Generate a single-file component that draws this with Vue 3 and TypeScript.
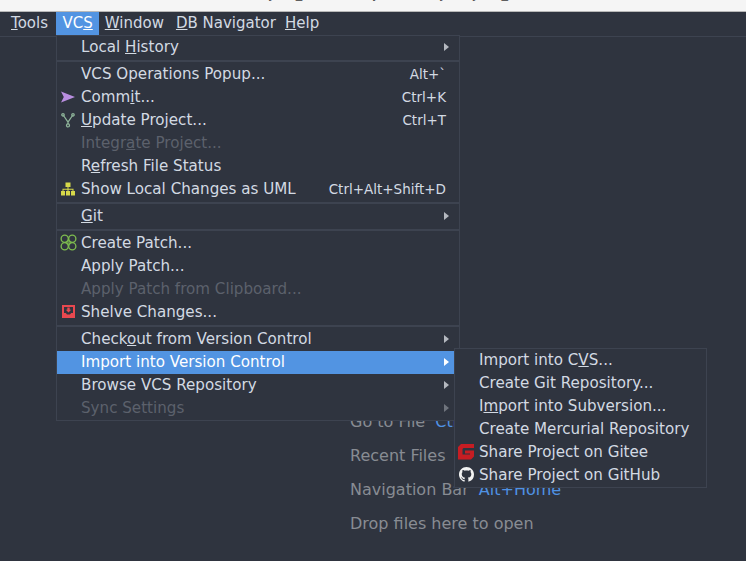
<script setup lang="ts">
interface Item {
  label?: string
  u?: number
  key?: string
  arrow?: boolean
  disabled?: boolean
  active?: boolean
  icon?: string
  sep?: boolean
}
const titleBits = [
  { ch: 'y', gap: 0 },
  { ch: '_', gap: 20 },
  { ch: 'j', gap: 71 },
  { ch: ',', gap: 10 },
  { ch: 'y', gap: 48 },
  { ch: 'y', gap: 25 },
  { ch: '_', gap: 22 },
  { ch: ',', gap: 68 },
]
const topMenus = [
  { label: 'Tools', u: 0 },
  { label: 'VCS', u: 2, active: true },
  { label: 'Window', u: 0 },
  { label: 'DB Navigator', u: 0 },
  { label: 'Help', u: 0 },
]
const items: Item[] = [
  { label: 'Local History', u: 6, arrow: true },
  { sep: true },
  { label: 'VCS Operations Popup...', key: 'Alt+`' },
  { label: 'Commit...', u: 4, key: 'Ctrl+K', icon: 'commit' },
  { label: 'Update Project...', u: 0, key: 'Ctrl+T', icon: 'update' },
  { label: 'Integrate Project...', u: 6, disabled: true },
  { label: 'Refresh File Status', u: 1 },
  { label: 'Show Local Changes as UML', key: 'Ctrl+Alt+Shift+D', icon: 'uml' },
  { sep: true },
  { label: 'Git', u: 0, arrow: true },
  { sep: true },
  { label: 'Create Patch...', icon: 'patch' },
  { label: 'Apply Patch...' },
  { label: 'Apply Patch from Clipboard...', disabled: true },
  { label: 'Shelve Changes...', icon: 'shelve' },
  { sep: true },
  { label: 'Checkout from Version Control', u: 5, arrow: true },
  { label: 'Import into Version Control', arrow: true, active: true },
  { label: 'Browse VCS Repository', arrow: true },
  { label: 'Sync Settings', arrow: true, disabled: true },
]
const subItems: Item[] = [
  { label: 'Import into CVS...', u: 13 },
  { label: 'Create Git Repository...' },
  { label: 'Import into Subversion...', u: 1 },
  { label: 'Create Mercurial Repository' },
  { label: 'Share Project on Gitee', icon: 'gitee' },
  { label: 'Share Project on GitHub', icon: 'github' },
]
const hints = [
  { label: 'Go to File', key: 'Ctrl+Shift+N' },
  { label: 'Recent Files', key: 'Ctrl+E' },
  { label: 'Navigation Bar', key: 'Alt+Home' },
  { label: 'Drop files here to open', key: '' },
]
function parts(label: string, u?: number): [string, string, string] {
  if (u === undefined) return [label, '', '']
  return [label.slice(0, u), label.charAt(u), label.slice(u + 1)]
}
</script>

<template>
  <div class="page">
    <div class="titlebar">
      <span v-for="(b, i) in titleBits" :key="i" class="bit" :style="{ marginLeft: b.gap + 'px' }">{{ b.ch }}</span>
    </div>
    <nav class="menubar">
      <span v-for="m in topMenus" :key="m.label" class="top" :class="{ on: m.active }">{{ parts(m.label, m.u)[0] }}<u>{{ parts(m.label, m.u)[1] }}</u>{{ parts(m.label, m.u)[2] }}</span>
    </nav>
    <main class="editor">
      <p v-for="h in hints" :key="h.label" class="hint">{{ h.label }} <span class="hint-key">{{ h.key }}</span></p>
    </main>

    <div class="menu main-menu">
      <template v-for="(it, i) in items" :key="i">
        <div v-if="it.sep" class="sep"></div>
        <div v-else class="row" :class="{ disabled: it.disabled, active: it.active }">
          <span class="ico">
            <svg v-if="it.icon === 'commit'" width="16" height="16" viewBox="0 0 16 16">
              <path d="M1 2.500l14 5.500-14 5.500 2.800-5.500z" fill="#b98ee0" />
            </svg>
            <svg v-else-if="it.icon === 'update'" width="16" height="16" viewBox="0 0 16 16" fill="none" stroke="#8fb59a" stroke-width="1.300">
              <path d="M3.500 3.500L8 10l4.500-6.500M8 10v2" />
              <circle cx="3" cy="2.800" r="1.200" />
              <circle cx="13" cy="2.800" r="1.200" />
              <circle cx="8" cy="13.400" r="1.500" />
            </svg>
            <svg v-else-if="it.icon === 'uml'" width="16" height="16" viewBox="0 0 16 16" fill="#d6d84a">
              <rect x="5.500" y="1.500" width="5" height="4.500" />
              <rect x="1" y="10" width="4" height="4.500" />
              <rect x="6" y="10" width="4" height="4.500" />
              <rect x="11" y="10" width="4" height="4.500" />
              <path d="M7.500 6h1v1.800h5V10h-1V8.800h-4V10h-1V8.800h-4V10h-1V7.800h5z" />
            </svg>
            <svg v-else-if="it.icon === 'patch'" width="17" height="17" viewBox="0 0 18 18" fill="none" stroke="#7dbb4f" stroke-width="1.400">
              <circle cx="5" cy="5" r="3.800" />
              <circle cx="13" cy="5" r="3.800" />
              <circle cx="5" cy="13" r="3.800" />
              <circle cx="13" cy="13" r="3.800" />
              <path d="M9 5l4 4-4 4-4-4z" fill="#7dbb4f" fill-opacity=".55" stroke="none" />
            </svg>
            <svg v-else-if="it.icon === 'shelve'" width="13" height="13" viewBox="0 0 13 13">
              <path d="M0 0h13v13H0z" fill="#e8484f" />
              <path d="M2 2h9v6H9.200L8 9.500H5L3.800 8H2z" fill="#2f343f" />
              <path d="M5.300 2.500h2.400v2.200h1.500L6.500 7.500 3.800 4.700h1.500z" fill="#e8484f" />
            </svg>
          </span>
          <span class="label">{{ parts(it.label!, it.u)[0] }}<u>{{ parts(it.label!, it.u)[1] }}</u>{{ parts(it.label!, it.u)[2] }}</span>
          <span v-if="it.key" class="key">{{ it.key }}</span>
          <span v-if="it.arrow" class="arrow"></span>
        </div>
      </template>
    </div>

    <div class="menu sub-menu">
      <div v-for="it in subItems" :key="it.label" class="row">
        <span class="ico">
          <svg v-if="it.icon === 'gitee'" width="16" height="16" viewBox="0 0 16 16">
            <path d="M3 0H16V4H5.500L4.500 5V10.500H12V9.500H7V6.500H16V12.500L13 15.500H0V3z" fill="#c71d23" />
          </svg>
          <svg v-else-if="it.icon === 'github'" width="15" height="15" viewBox="0 0 16 16">
            <path fill="#f2f2f2" d="M8 0C3.580 0 0 3.580 0 8c0 3.540 2.290 6.530 5.470 7.590.4.070.55-.17.55-.38 0-.19-.01-.82-.01-1.490-2.010.37-2.530-.49-2.690-.94-.09-.23-.48-.94-.82-1.130-.28-.15-.68-.52-.01-.53.63-.01 1.080.58 1.230.82.72 1.210 1.870.87 2.330.66.07-.52.28-.87.51-1.070-1.780-.2-3.640-.89-3.640-3.950 0-.87.31-1.590.82-2.150-.08-.2-.36-1.020.08-2.120 0 0 .67-.21 2.200.82.64-.18 1.320-.27 2-.27.68 0 1.360.09 2 .27 1.530-1.040 2.200-.82 2.200-.82.44 1.100.16 1.920.08 2.120.51.56.82 1.270.82 2.150 0 3.070-1.870 3.750-3.650 3.950.29.25.54.73.54 1.480 0 1.070-.01 1.930-.01 2.200 0 .21.15.46.55.38A8.013 8.013 0 0016 8c0-4.420-3.580-8-8-8z" />
          </svg>
        </span>
        <span class="label">{{ parts(it.label!, it.u)[0] }}<u>{{ parts(it.label!, it.u)[1] }}</u>{{ parts(it.label!, it.u)[2] }}</span>
      </div>
    </div>
  </div>
</template>

<style scoped>
.page {
  position: relative;
  width: 746px;
  height: 561px;
  overflow: hidden;
  background: #2f343f;
  color: #d3dae3;
  font-family: "DejaVu Sans", sans-serif;
  font-size: 15.13px;
}
.titlebar {
  display: flex;
  height: 11px;
  padding-left: 268px;
  background: #f5f5f5;
  border-bottom: 1px solid #b8b8b8;
  overflow: hidden;
}
.bit {
  margin-top: -14px;
  height: 16px;
  color: #555;
  font-size: 13px;
  line-height: 16px;
  white-space: pre;
}
.menubar {
  display: flex;
  height: 24px;
  padding-left: 5px;
  border-bottom: 1px solid #3d4350;
  font-size: 15px;
}
.top {
  padding: 0 6px;
  line-height: 22px;
  height: 23px;
  white-space: pre;
}
.top:first-child {
  padding-right: 8.5px;
}
.top:nth-child(4) {
  padding-right: 3px;
}
.top.on {
  background: #5294e2;
  color: #fff;
}
.editor {
  padding: 375px 0 0 350px;
}
.hint {
  margin: 0 0 14px;
  font-size: 16px;
  line-height: 20px;
  color: #888c93;
  white-space: pre;
}
.hint-key {
  color: #4f92e4;
  margin-left: 5px;
}
.menu {
  position: absolute;
  background: #2f343f;
  border: 1px solid #3d4350;
  box-sizing: border-box;
}
.main-menu {
  left: 56px;
  top: 35px;
  width: 404px;
  height: 386px;
}
.sub-menu {
  left: 454px;
  top: 348px;
  width: 253px;
  height: 140px;
}
.row {
  display: flex;
  align-items: center;
  height: 23px;
  white-space: pre;
  padding-right: 10px;
}
.row.disabled {
  color: #5c616c;
}
.row.active {
  background: #5294e2;
  color: #fff;
}
.ico {
  width: 22px;
  height: 21px;
  margin-right: 2px;
  margin-bottom: 2px;
  flex: none;
  display: flex;
  justify-content: center;
  align-items: center;
}
.label {
  flex: 1;
  line-height: 19px;
}
.key {
  margin-right: 3px;
  font-size: 13.5px;
  line-height: 19px;
}
.arrow {
  width: 0;
  height: 0;
  border-left: 5px solid #b4b8bf;
  border-top: 4px solid transparent;
  border-bottom: 4px solid transparent;
  margin-bottom: 1px;
}
.active .arrow {
  border-left-color: #fff;
}
.disabled .arrow {
  border-left-color: #6f747d;
}
.sep {
  height: 4px;
  background: linear-gradient(#3d4350, #3d4350) center / 100% 2px no-repeat;
}
</style>
